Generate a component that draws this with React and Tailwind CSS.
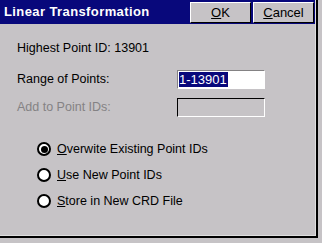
import React from "react";

const font = { fontFamily: "'Liberation Sans', Arial, sans-serif" };

function Radio({ checked, label, accel }) {
  return (
    <div className="flex items-center h-[26px]">
      <span className="w-[14px] h-[14px] rounded-full bg-white border-2 border-black flex items-center justify-center">
        {checked && <span className="w-[7px] h-[7px] rounded-full bg-black" />}
      </span>
      <span className="ml-[6px] text-[12.5px] text-black">
        <span className="underline">{accel}</span>
        {label}
      </span>
    </div>
  );
}

export default function App() {
  return (
    <div className="w-[322px] h-[243px] bg-[#c6c3c6] overflow-hidden" style={font}>
      {/* window frame */}
      <div className="w-[318px] h-[238px] border-r-2 border-b-2 border-black">
        <div className="w-full h-full flex flex-col border-r border-b border-[#dedede]">
          {/* title bar */}
          <div className="h-[24px] bg-[#08087b] flex items-center pl-[4px] pr-[1px]">
            <span className="text-white font-bold text-[13px] tracking-[0.4px] flex-1">
              Linear Transformation
            </span>
            <button className="w-[61px] h-[21px] bg-[#c6c3c6] border border-t-white border-l-white border-r-black border-b-black text-[13px] text-black leading-none">
              <span className="underline">O</span>K
            </button>
            <button className="ml-[2px] w-[61px] h-[21px] bg-[#c6c3c6] border border-t-white border-l-white border-r-black border-b-black text-[13px] text-black leading-none">
              <span className="underline">C</span>ancel
            </button>
          </div>

          {/* body */}
          <div className="flex-1 pl-[17px] pt-[15px] text-[12.5px]">
            <div className="h-[19px] flex items-center text-black">Highest Point ID: 13901</div>
            <div className="mt-[11px] flex items-center h-[20px]">
              <span className="w-[160px] text-black">Range of Points:</span>
              <div className="w-[88px] h-[19px] bg-white border border-t-[#848284] border-l-[#848284] border-r-white border-b-white flex items-center pl-[1px]">
                <span className="bg-[#08087b] text-white leading-[15px] pr-[1px] text-[13px]">1-13901</span>
              </div>
            </div>
            <div className="mt-[8px] flex items-center h-[20px]">
              <span className="w-[160px] text-[#848284]">Add to Point IDs:</span>
              <div className="w-[88px] h-[19px] bg-[#c6c3c6] border border-t-black border-l-black border-r-white border-b-white" />
            </div>

            <div className="mt-[19px] pl-[20px] flex flex-col">
              <Radio checked accel="O" label="verwite Existing Point IDs" />
              <Radio accel="U" label="se New Point IDs" />
              <Radio accel="S" label="tore in New CRD File" />
            </div>
          </div>
        </div>
      </div>
    </div>
  );
}
